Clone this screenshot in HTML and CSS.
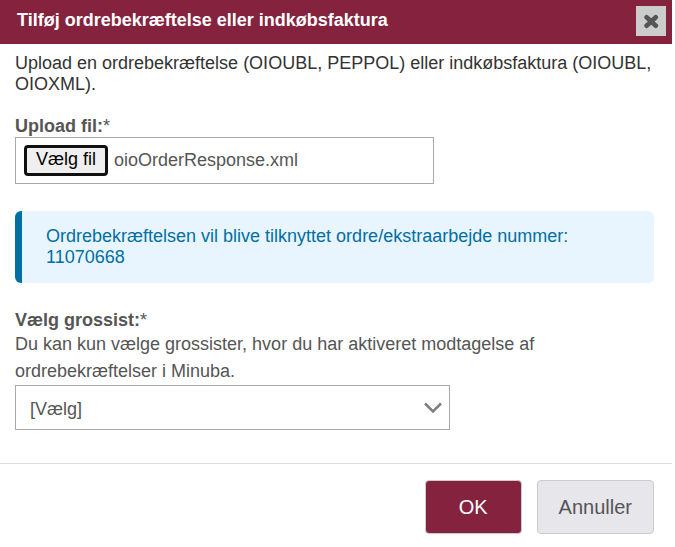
FILE: index.html
```
<!DOCTYPE html>
<html lang="da">
  <head>
    <meta charset="UTF-8" />
    <meta name="viewport" content="width=device-width, initial-scale=1.0" />
    <title>Tilføj ordrebekræftelse eller indkøbsfaktura</title>
    <link rel="stylesheet" href="styles.css">
  </head>
  <body>
    <form class="dialog" role="dialog" aria-labelledby="dialog-title">
      <header class="dialog-header">
        <h1 class="dialog-title" id="dialog-title">Tilføj ordrebekræftelse eller indkøbsfaktura</h1>
        <button class="close" type="button" aria-label="Luk">
          <svg width="16" height="16" viewBox="0 0 16 16" aria-hidden="true">
            <path d="M3.6 4.2L12.8 12.8M12.8 4.2L3.6 12.8" fill="none" stroke="#555" stroke-width="4.6" stroke-linecap="round" />
          </svg>
        </button>
      </header>

      <div class="dialog-body">
        <p class="intro">Upload en ordrebekræftelse (OIOUBL, PEPPOL) eller indkøbsfaktura (OIOUBL, OIOXML).</p>

        <div class="field">
          <label class="field-label" for="file"><b>Upload fil:</b>*</label>
          <div class="file-box">
            <input class="file-input" type="file" id="file" accept=".xml" />
            <span class="file-button">Vælg fil</span>
            <span class="file-name">oioOrderResponse.xml</span>
          </div>
        </div>

        <div class="info">Ordrebekræftelsen vil blive tilknyttet ordre/ekstraarbejde nummer: 11070668</div>

        <div class="field">
          <label class="field-label" for="supplier"><b>Vælg grossist:</b>*</label>
          <p class="help">Du kan kun vælge grossister, hvor du har aktiveret modtagelse af ordrebekræftelser i Minuba.</p>
          <div class="select-box">
            <select class="select" id="supplier">
              <option>[Vælg]</option>
            </select>
            <svg class="chevron" width="18" height="12" viewBox="0 0 18 12" aria-hidden="true">
              <path d="M1 1.5L9 9.5L17 1.5" fill="none" stroke="#808080" stroke-width="2.6" />
            </svg>
          </div>
        </div>
      </div>

      <footer class="dialog-footer">
        <button class="btn btn-primary" type="submit">OK</button>
        <button class="btn" type="button">Annuller</button>
      </footer>
    </form>

    <script>
      const input = document.querySelector('.file-input')
      const fileName = document.querySelector('.file-name')

      input.addEventListener('change', () => {
        if (input.files.length) {
          fileName.textContent = input.files[0].name
        }
      })
    </script>
  </body>
</html>
```
FILE: styles.css
```
* {
  box-sizing: border-box;
}

body {
  margin: 0;
  background: #fff;
  color: #555;
  font: 18px/21px "Liberation Sans", Arial, sans-serif;
}

.dialog {
  margin-right: 3px;
}

.dialog-header {
  display: flex;
  align-items: center;
  justify-content: space-between;
  padding: 6px 6px 8px 17px;
  background: #85233f;
}

.dialog-title {
  margin: 0;
  padding-bottom: 2px;
  color: #fff;
  font-size: 18px;
  line-height: 21px;
}

.close {
  display: flex;
  align-items: center;
  justify-content: center;
  width: 30px;
  height: 30px;
  padding: 0;
  border: 0;
  background: #ccc;
}

.dialog-body {
  padding: 9px 18px 33px 15px;
}

.intro {
  margin: 0 0 21px;
  color: #333;
}

.field-label {
  display: block;
}

.file-box {
  position: relative;
  display: flex;
  align-items: center;
  gap: 6px;
  width: 66%;
  max-width: 419px;
  padding: 7px 8px;
  border: 1px solid #aaa;
}

/* the real input lies transparent over the whole box */
.file-input {
  position: absolute;
  inset: 0;
  width: 100%;
  height: 100%;
  opacity: 0;
  cursor: pointer;
}

.file-button {
  padding: 1px 9px 3px;
  border: 3px solid #101010;
  border-radius: 4px;
  background: #efefef;
  color: #000;
}

.info {
  margin: 27px 0;
  padding: 15px 24px;
  border-left: 7px solid #006fa3;
  border-radius: 6px;
  background: #e8f5fe;
  color: #006fa3;
}

.help {
  max-width: 560px;
  margin: 0;
  line-height: 27px;
}

.select-box {
  position: relative;
  width: 68%;
}

.select {
  display: block;
  width: 100%;
  padding: 13px 40px 9px 14px;
  border: 1px solid #aaa;
  border-radius: 0;
  appearance: none;
  background: #fff;
  color: #555;
  font: inherit;
}

.chevron {
  position: absolute;
  top: 17px;
  right: 8px;
  pointer-events: none;
}

.dialog-footer {
  display: flex;
  justify-content: flex-end;
  gap: 15px;
  padding: 16px 18px 13px;
  border-top: 1px solid #ddd;
}

.btn {
  padding: 14px 21px;
  border: 1px solid #ccc;
  border-radius: 4px;
  background: #e6e6eb;
  color: #555;
  font: 20px/24px "Liberation Sans", Arial, sans-serif;
}

.btn-primary {
  padding: 14px 33px;
  background: #85233f;
  color: #fff;
}
```
